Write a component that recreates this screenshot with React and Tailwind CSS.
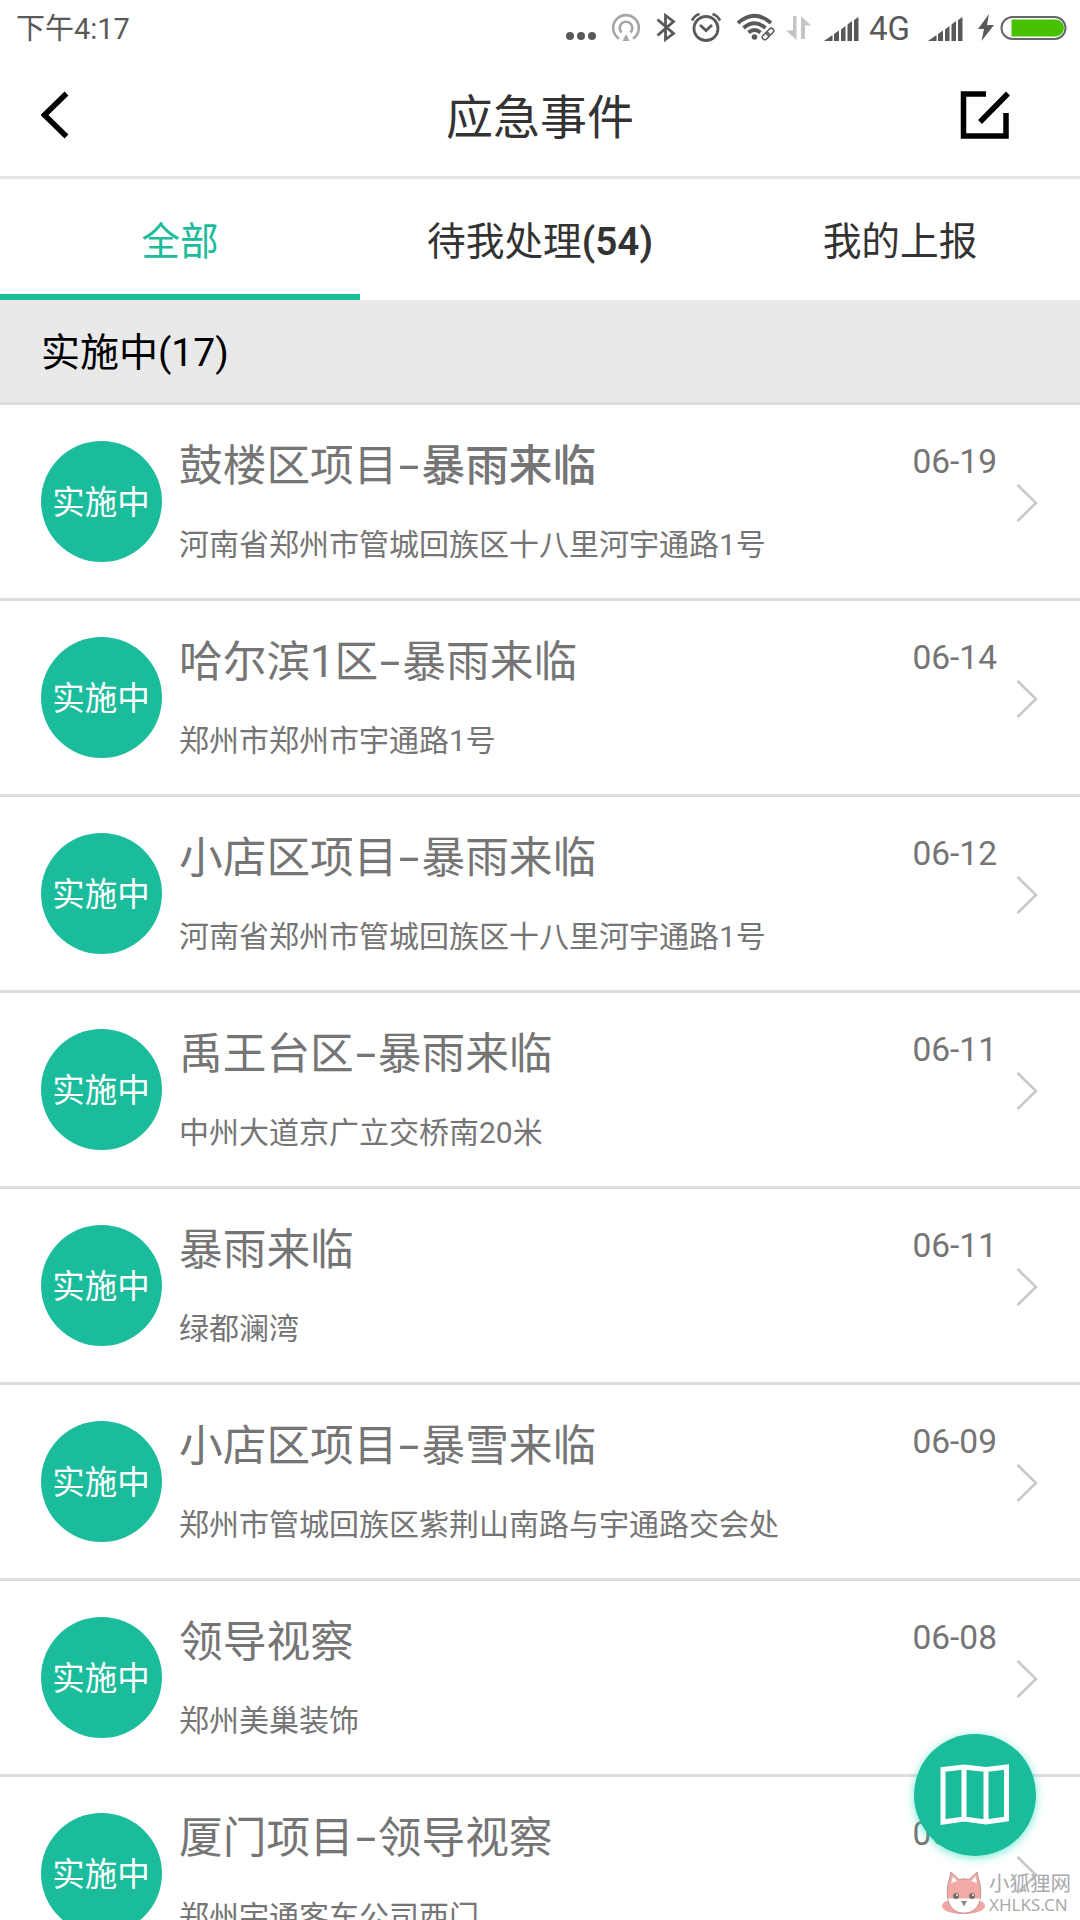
const EVENTS = [
  { area: '鼓楼区项目', name: '暴雨来临', address: '河南省郑州市管城回族区十八里河宇通路1号', date: '06-19', unread: true },
  { area: '哈尔滨1区', name: '暴雨来临', address: '郑州市郑州市宇通路1号', date: '06-14' },
  { area: '小店区项目', name: '暴雨来临', address: '河南省郑州市管城回族区十八里河宇通路1号', date: '06-12' },
  { area: '禹王台区', name: '暴雨来临', address: '中州大道京广立交桥南20米', date: '06-11' },
  { name: '暴雨来临', address: '绿都澜湾', date: '06-11' },
  { area: '小店区项目', name: '暴雪来临', address: '郑州市管城回族区紫荆山南路与宇通路交会处', date: '06-09' },
  { name: '领导视察', address: '郑州美巢装饰', date: '06-08' },
  { area: '厦门项目', name: '领导视察', address: '郑州宇通客车公司西门', date: '06-08' }
];

const Signal = ({ className }) => (
  <svg className={className} width="35" height="24" viewBox="0 0 35 24" fill="#595959">
    <path d="M0 24 L8.500 18 V24Z M10 17 L15 13.500 V24 H10Z M17 12.500 L21.500 9 V24 H17Z M23.500 7.500 L28 4 V24 H23.500Z M30 3 L34.500 0 V24 H30Z" />
  </svg>
);

const StatusBar = () => (
  <div className="flex h-[57px] items-center pl-4 pr-[11px] text-[#595959]">
    <span className="pt-[2px] text-[29px] leading-none">下午4:17</span>
    <svg className="ml-auto" width="252" height="57" viewBox="0 0 252 57" fill="none" stroke="#595959">
      <g fill="#595959" stroke="none">
        <circle cx="10" cy="36" r="4" />
        <circle cx="21" cy="36" r="4" />
        <circle cx="32" cy="36" r="4" />
      </g>
      <g stroke="#a6a6a6" strokeWidth="2.600">
        <path d="M59 38.600 A12.800 12.800 0 1 1 73 38.600" />
        <path d="M61.500 32.500 A6.300 6.300 0 1 1 70.500 32.500" />
        <path d="M66 34 L69.500 41 H62.500Z" fill="#a6a6a6" stroke="none" />
      </g>
      <path d="M97.500 19.500 L113.500 33.500 L105.500 39.500 V15.500 L113.500 21.500 L97.500 35.500" strokeWidth="2.800" />
      <g strokeWidth="2.800">
        <circle cx="146" cy="28.500" r="12" />
        <path d="M140 25 L146 30.500 L152 25" />
        <path d="M132 20.500 Q134.500 15.500 139.500 14 M152.500 14 Q157.500 15.500 160 20.500" />
      </g>
      <g strokeWidth="3.800">
        <path d="M178 23 Q194.500 8.500 211 23" />
        <path d="M183.500 28 Q194.500 18.500 205.500 28" />
        <path d="M188.500 32.500 Q194.500 27.500 200.500 32.500" />
        <circle cx="194.500" cy="37" r="2.800" fill="#595959" stroke="none" />
      </g>
      <g transform="rotate(-45 208 34)" strokeWidth="1.500">
        <rect x="201" y="31.500" width="8" height="5" rx="2.500" />
        <rect x="207" y="31.500" width="8" height="5" rx="2.500" />
      </g>
      <path d="M233 16 H236.500 V40 L226 30.500 H233Z M241 16 L251 25.500 H245 V39 H241Z" fill="#c4c4c4" stroke="none" />
    </svg>
    <Signal className="ml-[12px]" />
    <span className="ml-[10px] font-[Roboto] text-[33px] leading-none">4G</span>
    <Signal className="ml-[18px]" />
    <svg className="ml-[14px]" width="92" height="30" viewBox="0 0 92 30">
      <path d="M12 0 L1 15 H7 L4.500 27 L17 11 H10Z" fill="#595959" />
      <rect x="24.500" y="3" width="64" height="22" rx="11" fill="none" stroke="#666" strokeWidth="2" />
      <path d="M34.500 5.500 H78.500 A8.500 8.500 0 0 1 78.500 22.500 H34.500Z" fill="#46c200" />
    </svg>
  </div>
);

const Header = () => (
  <header className="grid h-[122px] grid-cols-[1fr_auto_1fr] items-center border-b-3 border-[#e5e5e5] pb-1">
    <svg className="ml-[41px]" width="50" height="48" viewBox="0 0 50 48" fill="none" stroke="#000" strokeWidth="5.500">
      <path d="M25.500 2.500 L3.500 24 L25.500 45.500" />
    </svg>
    <h1 className="pt-[6px] text-[47px] leading-none text-[#333]">应急事件</h1>
    <svg className="mr-[70px] justify-self-end" width="50" height="50" viewBox="0 0 50 50" fill="none" stroke="#000" strokeWidth="5.500">
      <path d="M26 4 H3.500 V46 H46 V23" />
      <path d="M48 3.500 L20 32" />
    </svg>
  </header>
);

const Tabs = () => (
  <nav className="grid h-[121px] grid-cols-3 text-center text-[38.700px] text-[#333]">
    <div className="flex items-center justify-center border-b-6 border-[#1bbc9b] pt-[11px] text-[#1bbc9b]">全部</div>
    <div className="flex items-center justify-center pt-[5px]">
      待我处理<span className="font-semibold">(54)</span>
    </div>
    <div className="flex items-center justify-center pt-[5px]">我的上报</div>
  </nav>
);

const EventRow = ({ event }) => (
  <li className="flex h-[196px] shrink-0 border-b-3 border-[#dedede] px-[41px] text-[#757575]">
    <div className="mt-9 flex size-[121px] shrink-0 items-center justify-center rounded-full bg-[#1bbc9b] pr-px pt-1 text-[32.500px] text-white">
      实施中
    </div>
    <div className="ml-[17px] flex-1 whitespace-nowrap">
      <h2 className="mt-[35px] flex text-[43.700px] leading-[52px]">
        {event.area}
        {event.area ? <span className="w-6 scale-x-170 text-center">-</span> : null}
        <span className={event.unread ? 'font-medium' : ''}>{event.name}</span>
      </h2>
      <p className="mt-[33px] text-[30px] leading-[40px]">{event.address}</p>
    </div>
    <span className="mt-[37px] font-[Roboto] text-[33.500px] leading-[40px]">{event.date}</span>
    <svg className="ml-[19px] mt-[78px]" width="23" height="40" viewBox="0 0 23 40" fill="none" stroke="#c8c8c8" strokeWidth="2.500">
      <path d="M1.500 2 L20 20 L1.500 38" />
    </svg>
  </li>
);

const Watermark = () => (
  <div className="absolute bottom-0 right-0 flex h-[52px] w-[139px] items-center text-[#a9a9ad]">
    <svg width="46" height="46" viewBox="0 0 46 46">
      <ellipse cx="22.500" cy="35" rx="21.500" ry="8" fill="#f0a5a3" />
      <path d="M7 13 L10 1 L18 8.500 Q23 7 28 8.500 L36 1 L39 13 C42 30 36 42 23 42 C10 42 4 30 7 13Z" fill="#f3aaa7" stroke="#9c8585" strokeWidth="0.700" />
      <path d="M10 12 L12 5.500 L16 10Z M36 12 L34.500 5.500 L30 10Z" fill="#fff" />
      <path d="M7 27.500 H39 Q36 41.500 23 41.500 Q10 41.500 7 27.500Z" fill="#fff" />
      <circle cx="15" cy="25" r="3" fill="#77716f" />
      <circle cx="31" cy="25" r="3" fill="#77716f" />
      <circle cx="16" cy="24" r="0.900" fill="#fff" />
      <circle cx="32" cy="24" r="0.900" fill="#fff" />
      <path d="M20 30 H26 L23 35.500Z" fill="#8b8b8b" />
    </svg>
    <div className="ml-[2px]">
      <div className="text-[20.500px] leading-[21px]">小狐狸网</div>
      <div className="font-['Noto_Sans'] text-[17px] leading-[19px]">XHLKS.CN</div>
    </div>
  </div>
);

const App = () => (
  <div className="relative flex h-[1920px] w-[1080px] flex-col overflow-hidden bg-white font-[Roboto,'Noto_Sans_CJK_SC',sans-serif]">
    <StatusBar />
    <Header />
    <Tabs />
    <div className="flex h-[105px] shrink-0 items-center border-b-3 border-[#dedede] bg-[#e9e9e9] pl-[41px] pt-[4px] text-[39px] text-black">
      实施中(17)
    </div>
    <ul className="flex min-h-0 flex-1 flex-col overflow-hidden">
      {EVENTS.map((event, index) => <EventRow key={index} event={event} />)}
    </ul>

    <button className="absolute left-[914px] top-[1734px] flex size-[122px] items-center justify-center rounded-full bg-[#1bbc9b] shadow-[0_2px_10px_rgba(27,220,180,0.6)]">
      <svg width="70" height="62" viewBox="0 0 70 62" fill="none" stroke="#fff" strokeWidth="5">
        <path d="M3 5.500 L24 3 L46 5.500 L66.500 3 V55 L46 58 L24 55 L3 58Z M24 3 V55 M46 5.500 V58" />
      </svg>
    </button>
    <Watermark />
  </div>
);

export default App;
